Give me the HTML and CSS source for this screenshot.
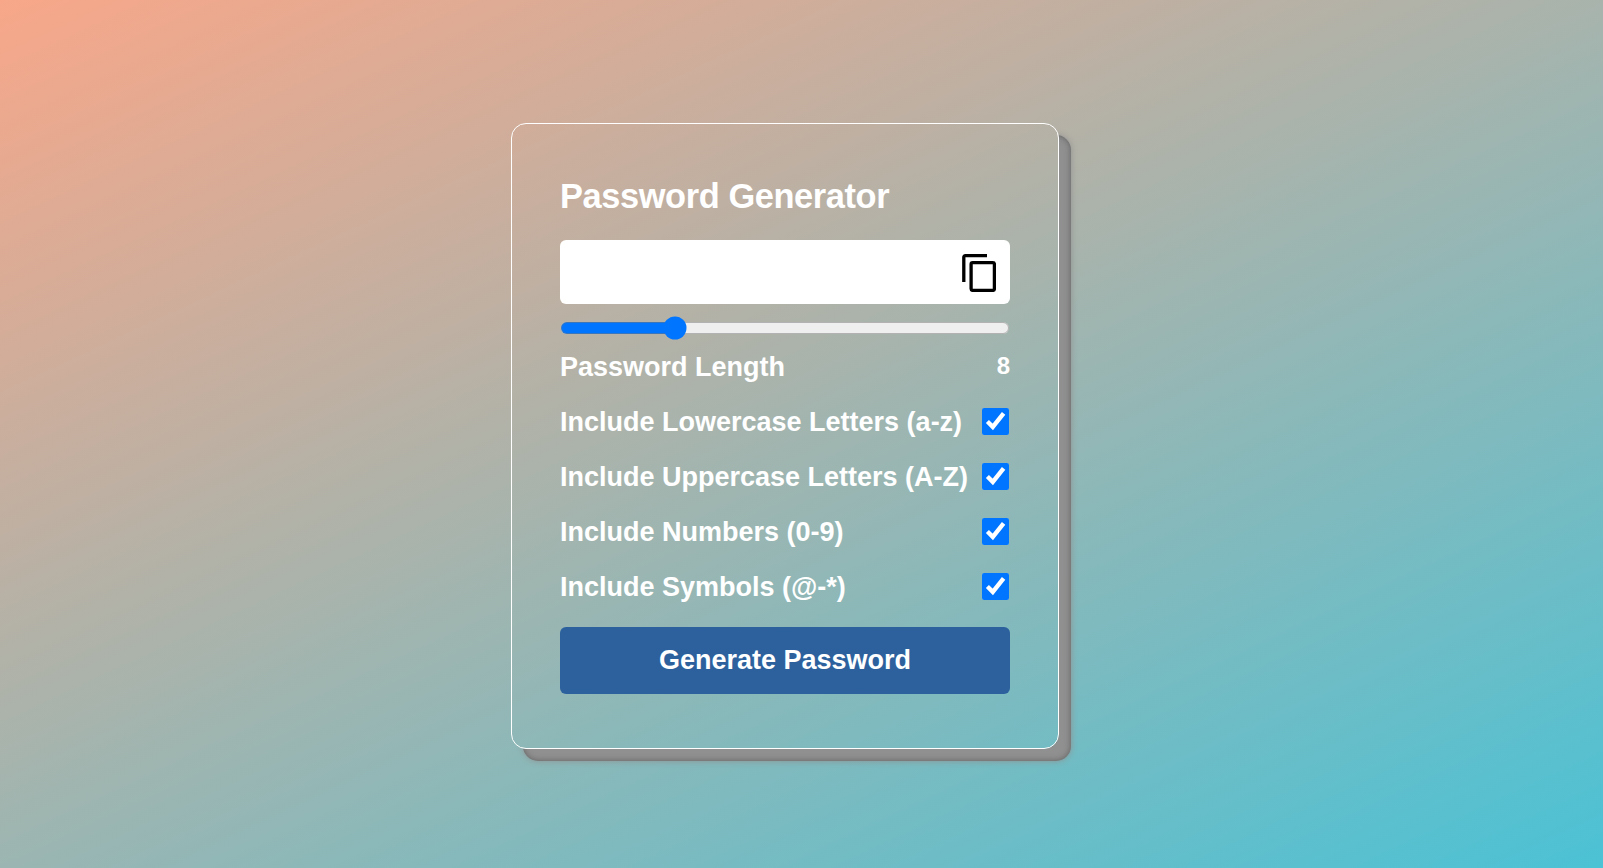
FILE: index.html
```html
<!DOCTYPE html>
<html lang="en">
<head>
<meta charset="utf-8">
<title>Password Generator</title>
<link rel="stylesheet" href="styles.css">
</head>
<body>
<main class="card">
  <h1 class="title">Password Generator</h1>
  <div class="output">
    <input class="output-field" type="text" readonly aria-label="Password">
    <svg class="copy" viewBox="0 0 34 38" role="img" aria-label="Copy"><path d="M1.8 28V3.3Q1.8 1.7 3.4 1.7H25"/><rect x="9.1" y="8.6" width="23.3" height="27.8" rx="1.6"/></svg>
  </div>
  <input class="slider" type="range" min="1" max="30" value="8" aria-label="Length">
  <div class="row"><label>Password Length</label><span class="count">8</span></div>
  <div class="row"><label for="lower">Include Lowercase Letters (a-z)</label><input id="lower" type="checkbox" checked></div>
  <div class="row"><label for="upper">Include Uppercase Letters (A-Z)</label><input id="upper" type="checkbox" checked></div>
  <div class="row"><label for="numbers">Include Numbers (0-9)</label><input id="numbers" type="checkbox" checked></div>
  <div class="row"><label for="symbols">Include Symbols (@-*)</label><input id="symbols" type="checkbox" checked></div>
  <button class="generate" type="button">Generate Password</button>
</main>
</body>
</html>
```
FILE: styles.css
```css
* {
  box-sizing: border-box;
  margin: 0;
  padding: 0;
}

body {
  height: 100vh;
  overflow: hidden;
  display: flex;
  justify-content: center;
  align-items: flex-start;
  padding: 123px 33px 0 0;
  font-family: "Liberation Sans", Arial, sans-serif;
  font-weight: bold;
  color: #fff;
  background: linear-gradient(155deg, #f8a789, #4bc2d5);
}

.card {
  width: 548px;
  height: 626px;
  padding: 48px;
  border: 1px solid #fff;
  border-radius: 15px;
  box-shadow: 12px 12px 6px #909090, 12px 12px 0 #606060;
  display: flex;
  flex-direction: column;
}

.card > * {
  flex-shrink: 0;
}

.title {
  font-size: 34.4px;
  line-height: 48px;
  letter-spacing: -0.4px;
  margin-bottom: 20px;
}

.output {
  height: 64px;
  display: flex;
  align-items: center;
  padding-right: 14px;
  border-radius: 6px;
  background: #fff;
}

.output-field {
  flex: 1;
  min-width: 0;
  height: 100%;
  border: 0;
  outline: 0;
  background: transparent;
}

.copy {
  width: 34px;
  height: 38px;
  margin-top: 2px;
  fill: none;
  stroke: #000;
  stroke-width: 3.3;
}

.slider {
  zoom: 1.5;
  width: 300px;
  height: 16px;
  margin-top: 8px;
  accent-color: #0075ff;
}

.row {
  height: 55px;
  display: flex;
  align-items: center;
  justify-content: space-between;
  font-size: 27px;
}

.slider + .row {
  margin-top: -1px;
}

.row label {
  padding-top: 1px;
}

.count {
  font-size: 24px;
  line-height: 30px;
  padding-bottom: 1px;
}

.row input {
  width: 27px;
  height: 27px;
  margin-right: 1px;
}

.generate {
  height: 67px;
  margin-top: 13px;
  border: 0;
  border-radius: 6px;
  font: bold 27px "Liberation Sans", Arial, sans-serif;
  color: #fff;
  background: #2c619e;
}
```
